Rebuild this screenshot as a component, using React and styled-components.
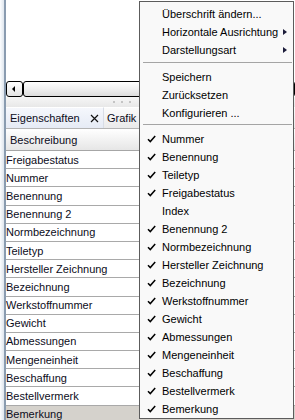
import React from "react";
import styled, { createGlobalStyle } from "styled-components";

const GlobalStyle = createGlobalStyle`
	html, body {
		margin: 0;
		padding: 0;
		background: #fff;
	}
	body {
		font-family: "Liberation Sans", Arial, sans-serif;
		font-size: 11px;
		color: #000;
	}
`;

const columns = [
	"Freigabestatus",
	"Nummer",
	"Benennung",
	"Benennung 2",
	"Normbezeichnung",
	"Teiletyp",
	"Hersteller Zeichnung",
	"Bezeichnung",
	"Werkstoffnummer",
	"Gewicht",
	"Abmessungen",
	"Mengeneinheit",
	"Beschaffung",
	"Bestellvermerk",
	"Bemerkung"
];

const visible = [
	["Nummer", true],
	["Benennung", true],
	["Teiletyp", true],
	["Freigabestatus", true],
	["Index", false],
	["Benennung 2", true],
	["Normbezeichnung", true],
	["Hersteller Zeichnung", true],
	["Bezeichnung", true],
	["Werkstoffnummer", true],
	["Gewicht", true],
	["Abmessungen", true],
	["Mengeneinheit", true],
	["Beschaffung", true],
	["Bestellvermerk", true],
	["Bemerkung", true]
];

const Check = () => (
	<svg width="9" height="8" viewBox="0 0 9 8">
		<path d="M1 4.2 L3.3 6.6 L8.2 1" fill="none" stroke="#000" strokeWidth="1.5" />
	</svg>
);

const Close = () => (
	<svg width="9" height="9" viewBox="0 0 9 9">
		<path d="M1 1 L8 8 M8 1 L1 8" stroke="#111" strokeWidth="1.2" />
	</svg>
);

const App = () => (
	<Window>
		<GlobalStyle />
		<Gutter />
		<Pane>
			<Canvas />
			<Scrollbar>
				<ArrowButton>
					<LeftArrow />
				</ArrowButton>
				<Thumb />
			</Scrollbar>
			<Splitter>
				<Dot />
				<Dot />
				<Dot />
			</Splitter>
			<TabStrip>
				<Tab active>
					<TabLabel>Eigenschaften</TabLabel>
					<Close />
				</Tab>
				<Tab>
					<TabLabel>Grafik</TabLabel>
				</Tab>
			</TabStrip>
			<Header>Beschreibung</Header>
			{columns.map(name => (
				<Row key={name} selected={name === "Bemerkung"}>
					{name}
				</Row>
			))}
		</Pane>

		<Menu>
			<Item>
				<CheckSlot />
				Überschrift ändern...
			</Item>
			<Item>
				<CheckSlot />
				Horizontale Ausrichtung
				<SubArrow />
			</Item>
			<Item>
				<CheckSlot />
				Darstellungsart
				<SubArrow />
			</Item>
			<Separator />
			<Item>
				<CheckSlot />
				Speichern
			</Item>
			<Item>
				<CheckSlot />
				Zurücksetzen
			</Item>
			<Item>
				<CheckSlot />
				Konfigurieren ...
			</Item>
			<Separator />
			{visible.map(([name, on]) => (
				<Item key={name}>
					<CheckSlot>{on && <Check />}</CheckSlot>
					{name}
				</Item>
			))}
		</Menu>
	</Window>
);

const Window = styled.div`
	position: relative;
	display: flex;
	width: 295px;
	height: 420px;
	overflow: hidden;
	background: #fff;
`;

const Gutter = styled.div`
	flex: none;
	width: 4px;
	background: linear-gradient(to right, #fcfdfe, #dfe6ee);
	border-right: 2px solid #8a9cb0;
`;

const Pane = styled.div`
	flex: 1;
	display: flex;
	flex-direction: column;
	min-width: 0;
`;

const Canvas = styled.div`
	flex: none;
	height: 81px;
	background: #fff;
`;

const Scrollbar = styled.div`
	flex: none;
	display: flex;
	height: 16px;
`;

const ArrowButton = styled.div`
	flex: none;
	box-sizing: border-box;
	width: 17px;
	border: 1px solid #000;
	border-radius: 3px;
	background: linear-gradient(#ffffff, #e4e4e4);
	display: flex;
	align-items: center;
	justify-content: center;
`;

const LeftArrow = styled.span`
	width: 0;
	height: 0;
	margin-left: -2px;
	border-top: 3px solid transparent;
	border-bottom: 3px solid transparent;
	border-right: 3px solid #000;
`;

const Thumb = styled.div`
	flex: 1;
	box-sizing: border-box;
	border: 1px solid #000;
	border-radius: 3px;
	background: linear-gradient(#ffffff, #f0f0f0 50%, #dcdcdc);
`;

const Splitter = styled.div`
	flex: none;
	display: flex;
	align-items: center;
	gap: 6px;
	height: 10px;
	padding-left: 107px;
	background: linear-gradient(#f6f6f6, #e8e8e8);
`;

const Dot = styled.span`
	width: 2px;
	height: 2px;
	background: #c4c4c4;
`;

const TabStrip = styled.div`
	flex: none;
	display: flex;
	height: 21px;
	background: #f2f2f2;
	border-bottom: 1px solid #b4b4b4;
`;

const Tab = styled.div`
	display: flex;
	align-items: center;
	box-sizing: border-box;
	width: ${({ active }) => (active ? "98px" : "auto")};
	flex: ${({ active }) => (active ? "none" : "1")};
	padding: ${({ active }) => (active ? "0 4px 0 4px" : "0 0 0 3px")};
	border-top: 1px solid #fff;
	border-right: ${({ active }) => (active ? "1px solid #d8dde6" : "none")};
	background: ${({ active }) =>
		active
			? "linear-gradient(#f5f7fc, #e6ebf5)"
			: "linear-gradient(#fbfbfb, #eaeaea)"};
`;

const TabLabel = styled.span`
	flex: 1;
	white-space: nowrap;
	color: #0c0c1a;
`;

const Header = styled.div`
	flex: none;
	display: flex;
	align-items: center;
	height: 21px;
	padding-left: 4px;
	background: linear-gradient(#ffffff, #f0f0f0 60%, #e6e6e6);
	border-bottom: 1px solid #a6a6a6;
	color: #0c0c1a;
`;

const Row = styled.div`
	flex: none;
	display: flex;
	align-items: center;
	box-sizing: border-box;
	height: 18.2px;
	padding-left: 0;
	white-space: nowrap;
	color: #0c0c1a;
	background: ${({ selected }) => (selected ? "#d5d2cc" : "#fff")};
	border-bottom: 1px solid #a9a9a9;
`;

const Menu = styled.div`
	position: absolute;
	left: 139px;
	top: 1px;
	box-sizing: border-box;
	width: 155px;
	height: 418px;
	padding-top: 3px;
	background: #f9f9f9;
	border: 1px solid #5c5c5c;
	display: flex;
	flex-direction: column;
`;

const Item = styled.div`
	flex: none;
	display: flex;
	align-items: center;
	height: 18px;
	white-space: nowrap;
	color: #000;
`;

const CheckSlot = styled.span`
	flex: none;
	display: flex;
	align-items: center;
	box-sizing: border-box;
	width: 22px;
	padding-left: 7px;
`;

const SubArrow = styled.span`
	margin-left: auto;
	margin-right: 6px;
	width: 0;
	height: 0;
	border-top: 3.5px solid transparent;
	border-bottom: 3.5px solid transparent;
	border-left: 4px solid #1c1c3a;
`;

const Separator = styled.div`
	flex: none;
	height: 8.5px;
	box-sizing: border-box;
	padding: 2.5px 1px 0 3px;

	&::before {
		content: "";
		display: block;
		height: 1px;
		background: #a5a5a5;
	}
`;

export default App;
